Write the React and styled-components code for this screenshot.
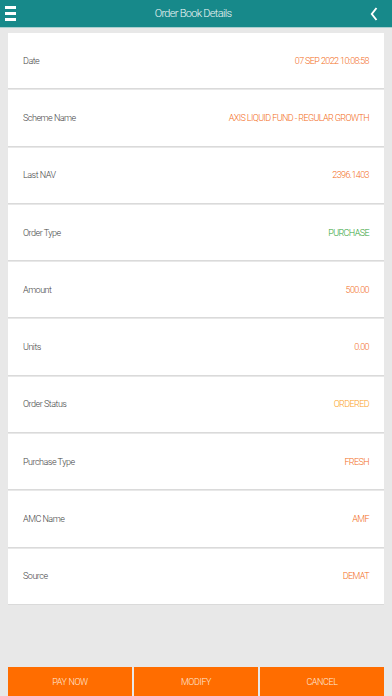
import React from 'react';
import styled, { createGlobalStyle } from 'styled-components';

const rows = [
  { label: 'Date', value: '07 SEP 2022 10:08:58', tone: 'orange' },
  { label: 'Scheme Name', value: 'AXIS LIQUID FUND - REGULAR GROWTH', tone: 'orange' },
  { label: 'Last NAV', value: '2396.1403', tone: 'orange' },
  { label: 'Order Type', value: 'PURCHASE', tone: 'green' },
  { label: 'Amount', value: '500.00', tone: 'orange' },
  { label: 'Units', value: '0.00', tone: 'orange' },
  { label: 'Order Status', value: 'ORDERED', tone: 'amber' },
  { label: 'Purchase Type', value: 'FRESH', tone: 'orange' },
  { label: 'AMC Name', value: 'AMF', tone: 'orange' },
  { label: 'Source', value: 'DEMAT', tone: 'orange' },
];

const tones = {
  orange: '#f36c21',
  green: '#2fa336',
  amber: '#fb9f1c',
};

function App() {
  return (
    <>
      <GlobalStyle />
      <Page>
        <TopBar>
          <MenuButton aria-label="menu">
            <Bar />
            <Bar />
            <Bar />
          </MenuButton>
          <Title>Order Book Details</Title>
          <BackButton aria-label="back">
            <svg width="8" height="14" viewBox="0 0 8 14">
              <path d="M6.5 1 L1.8 7 L6.5 13" fill="none" stroke="#fff" strokeWidth="1.9" />
            </svg>
          </BackButton>
        </TopBar>

        <List>
          {rows.map((row) => (
            <Card key={row.label}>
              <Label>{row.label}</Label>
              <Value $tone={row.tone}>{row.value}</Value>
            </Card>
          ))}
        </List>

        <Actions>
          <Action>PAY NOW</Action>
          <Action>MODIFY</Action>
          <Action>CANCEL</Action>
        </Actions>
      </Page>
    </>
  );
}

export default App;

const GlobalStyle = createGlobalStyle`
  html, body {
    margin: 0;
    padding: 0;
    background: #e8e8e8;
    font-family: Roboto, "Liberation Sans", sans-serif;
  }
  * {
    box-sizing: border-box;
  }
`;

const Page = styled.div`
  display: flex;
  flex-direction: column;
  height: 696px;
  overflow: hidden;
  background: #e8e8e8;
`;

const TopBar = styled.div`
  display: flex;
  align-items: center;
  justify-content: space-between;
  height: 28px;
  padding: 0 14px 0 5px;
  background: #17898a;
  border-bottom: 1px solid #a9cfcf;
`;

const MenuButton = styled.div`
  display: flex;
  flex-direction: column;
  gap: 3px;
  width: 11px;
`;

const Bar = styled.div`
  height: 3px;
  background: #fff;
`;

const Title = styled.div`
  color: #eef6f6;
  font-size: 11px;
  font-weight: 300;
  letter-spacing: -0.7px;
`;

const BackButton = styled.div`
  display: flex;
  align-items: center;
  width: 8px;
  height: 14px;
`;

const List = styled.div`
  display: flex;
  flex-direction: column;
  gap: 2px;
  padding: 5px 8px 0;
`;

const Card = styled.div`
  display: flex;
  align-items: center;
  justify-content: space-between;
  height: 55.3px;
  padding: 0 15px;
  background: #fff;
  box-shadow: 0 1px 0 #dadada;
`;

const Label = styled.span`
  color: #444;
  font-size: 9px;
  font-weight: 300;
  letter-spacing: -0.5px;
`;

const Value = styled.span`
  color: ${(p) => tones[p.$tone]};
  font-size: 9px;
  font-weight: 300;
  letter-spacing: -0.6px;
`;

const Actions = styled.div`
  display: grid;
  grid-template-columns: repeat(3, 1fr);
  gap: 2px;
  margin-top: auto;
  padding: 0 8px;
`;

const Action = styled.button`
  height: 29px;
  border: none;
  background: #ff6d00;
  color: #fde9dc;
  font-family: Roboto, sans-serif;
  font-size: 9px;
  font-weight: 300;
  letter-spacing: -0.4px;
  padding: 0;
`;
